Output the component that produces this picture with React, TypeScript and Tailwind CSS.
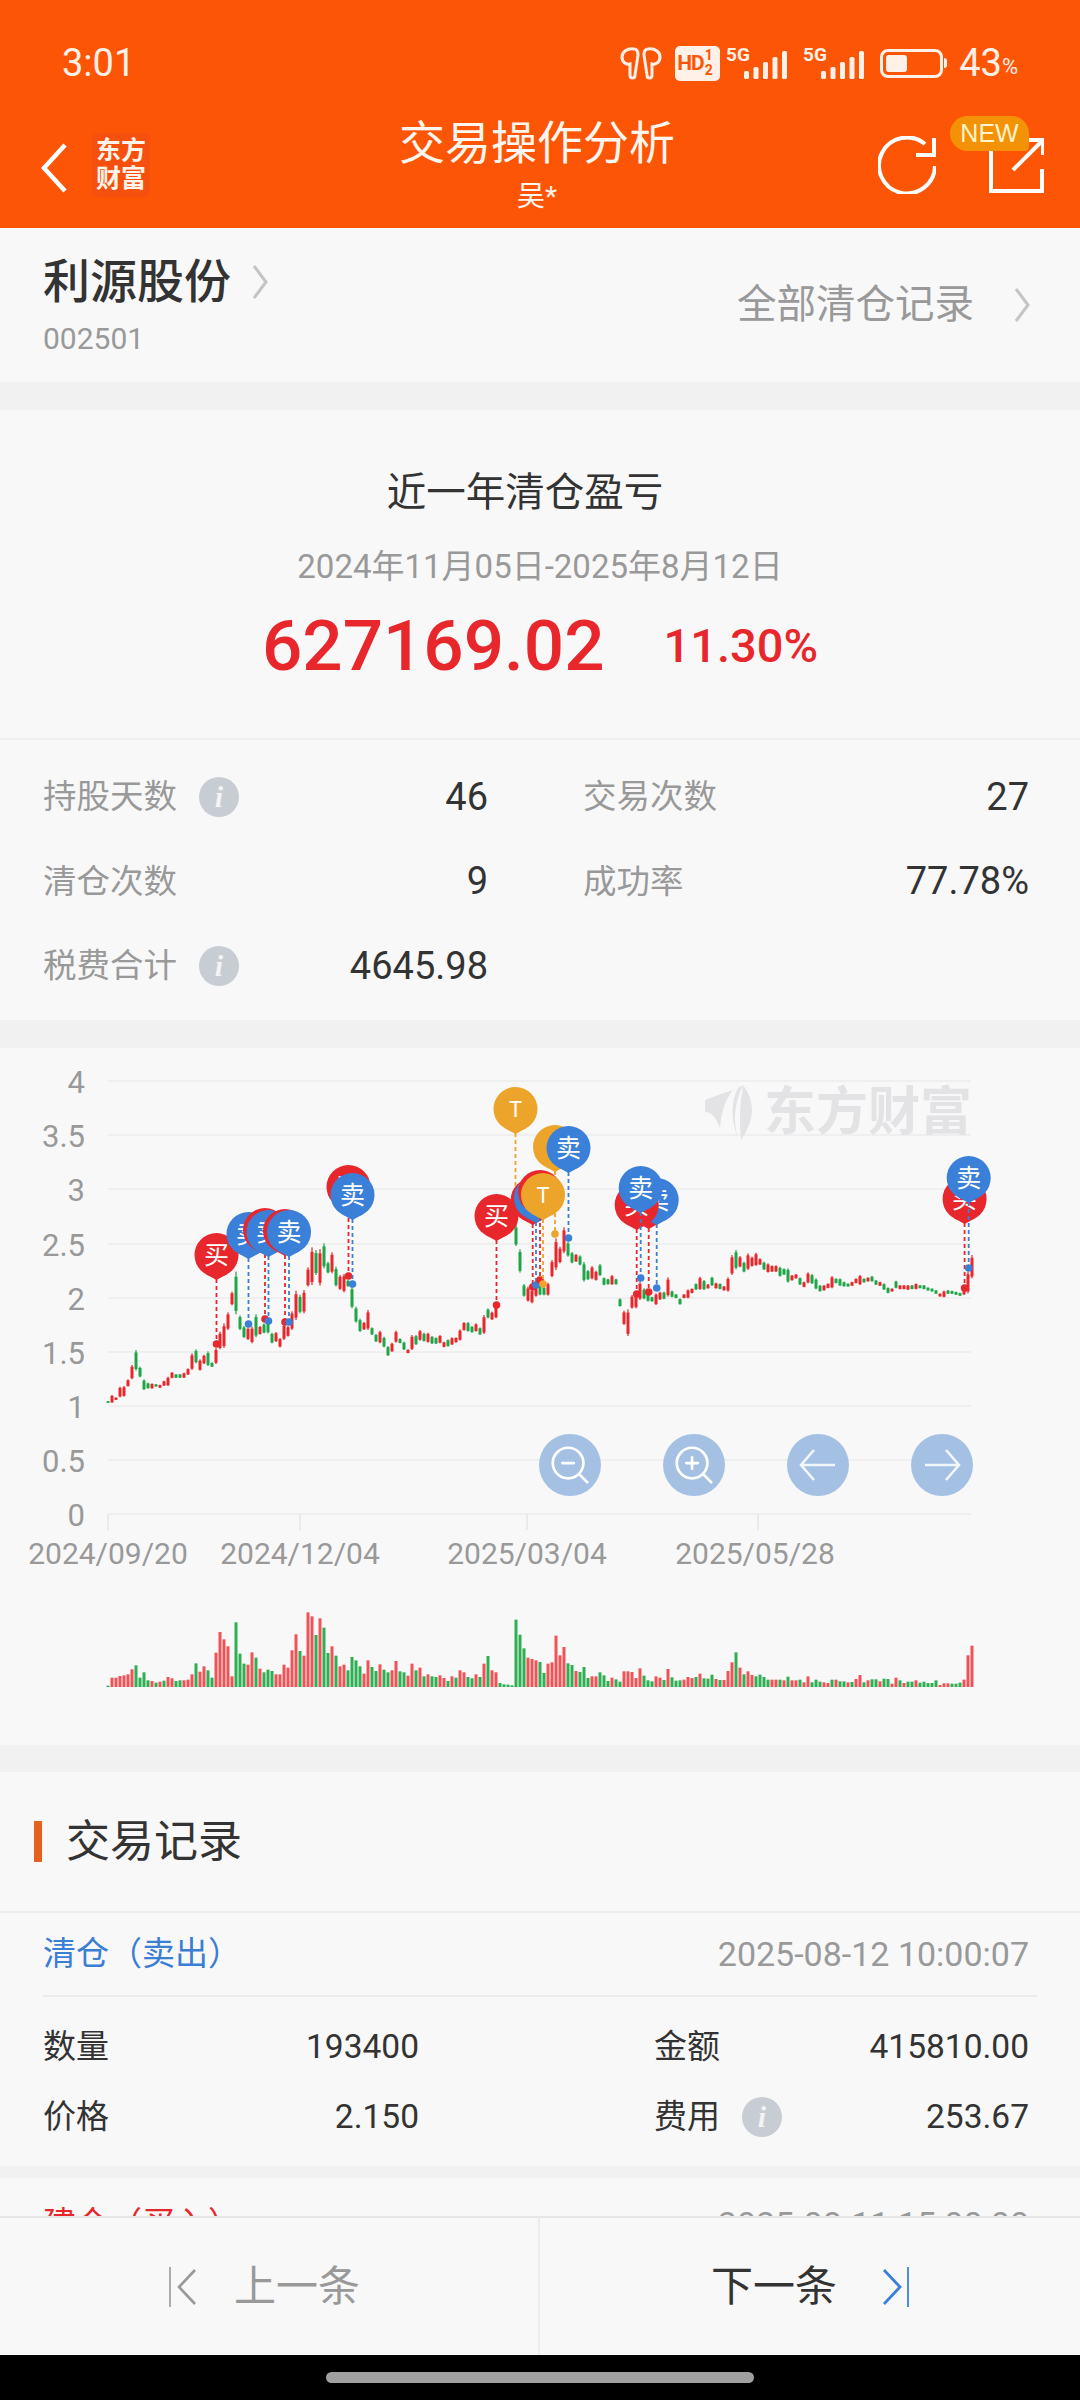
import React from "react";
import { ZoomIn, ZoomOut } from "lucide-react";

type Candle = [number, "r" | "g", number, number];

const RED = "#e8272c";
const GREEN = "#1ea548";
const BLUE = "#3a7fd8";
const ORANGE = "#eda42a";

// Daily candles grouped by stretch; values are in the chart's own vertical units and scaled in toCandles.
const early: Candle[] = [
  [0,"g",543,549],[1,"r",525,549],[2,"r",532,540],[3,"r",500,532],[4,"r",498,530],[5,"r",478,500],[6,"r",435,478],[7,"g",390,452],[8,"g",440,472],[9,"g",478,510],
  [10,"g",488,506],[11,"r",490,506],[12,"g",492,500],[13,"r",494,504],[14,"r",482,498],[15,"r",470,498],[16,"r",456,475],[17,"g",462,474],[18,"g",462,474],[19,"r",458,474],
  [20,"r",445,465],[21,"r",400,450],[22,"g",388,430],[23,"r",418,452],[24,"r",404,432],[25,"g",394,438],[26,"g",427,441],[27,"r",384,432],[28,"r",335,388],[29,"r",310,384],
  [30,"r",277,330],[31,"r",215,256],[32,"g",155,283],[33,"g",286,330],[34,"g",318,354],[35,"r",322,360],[36,"r",320,370],[37,"g",283,352],[38,"r",318,344],[39,"g",310,340],
  [40,"g",300,340],[41,"g",338,370],[42,"r",336,366],[43,"r",354,382],[44,"r",312,360],[45,"r",318,350],[46,"r",274,330],[47,"r",212,300],[48,"g",224,280],[49,"r",210,280],
  [50,"r",142,200],[51,"r",82,195],[52,"g",90,165],[53,"r",87,197],[54,"g",70,145],[55,"g",126,160],[56,"r",97,160],[57,"g",140,200],[58,"r",165,210],[59,"r",162,217],
  [60,"g",180,200],[61,"g",200,265],[62,"g",260,308],[63,"g",296,336],[64,"r",306,330],[65,"r",270,330],[66,"g",322,345],[67,"g",342,366],[68,"r",332,370],[69,"g",350,382],
  [70,"g",378,408],[71,"r",368,396],[72,"r",332,368],[73,"g",355,370],
];
const middle: Candle[] = [
  [74,"g",575,600],[75,"r",598,610],[76,"r",555,600],[77,"g",555,585],[78,"r",540,572],[79,"g",548,575],[80,"r",548,578],[81,"g",558,582],[82,"g",562,582],[83,"r",555,580],
  [84,"r",575,592],[85,"g",568,590],[86,"r",562,585],[87,"r",562,578],[88,"r",538,572],[89,"r",516,542],[90,"g",516,545],[91,"g",528,548],[92,"r",520,545],[93,"g",532,555],
  [94,"r",495,552],[95,"g",475,505],[96,"r",485,510],[97,"r",465,505],[102,"g",225,288],[103,"g",298,368],[104,"g",402,440],[105,"r",410,455],[106,"r",418,460],[107,"r",405,440],
  [108,"g",405,436],[109,"g",410,436],[110,"r",398,437],[111,"r",330,382],[112,"r",265,360],[113,"r",290,340],[114,"r",232,310],[115,"g",275,320],[116,"g",306,340],[117,"r",312,336],
  [118,"g",316,346],[119,"g",336,395],[120,"g",360,390],[121,"r",348,388],[122,"r",362,392],[123,"g",342,378],[124,"g",382,406],[125,"g",386,404],[126,"r",375,405],[127,"g",386,404],
];
const late: Candle[] = [
  [128,"g",775,800],[129,"r",812,855],[130,"r",808,888],[131,"r",765,806],[132,"r",760,805],[133,"r",725,780],[134,"g",745,778],[135,"g",750,785],[136,"g",770,785],[137,"r",760,795],
  [138,"r",755,780],[139,"g",755,778],[140,"r",712,770],[141,"g",752,772],[142,"g",762,775],[143,"g",775,794],[144,"r",762,775],[145,"r",748,775],[146,"r",745,760],[147,"g",730,750],
  [148,"r",710,750],[149,"g",720,750],[150,"r",732,746],[151,"g",710,738],[152,"r",728,746],[153,"g",730,748],[154,"r",738,752],[155,"r",712,755],[156,"r",645,705],[157,"g",630,688],
  [158,"r",648,682],[159,"g",665,697],[160,"r",640,690],[161,"r",650,680],[162,"r",638,678],[163,"r",655,675],[164,"g",665,690],[165,"r",670,698],[166,"r",676,696],[167,"r",676,696],
  [168,"g",680,710],[169,"g",685,705],[170,"g",685,728],[171,"r",705,722],[172,"r",702,716],[173,"g",712,735],[174,"r",725,742],[175,"r",697,730],[176,"g",702,732],[177,"g",715,748],
  [178,"g",735,755],[179,"r",735,752],[180,"r",730,745],[181,"r",708,745],[182,"g",715,730],[183,"g",715,738],[184,"g",725,740],[185,"g",730,740],[186,"r",725,738],[187,"r",715,730],
  [188,"r",705,735],[189,"g",715,728],[190,"r",712,725],[191,"g",708,725],[192,"g",720,735],[193,"r",725,738],[194,"g",730,750],[195,"g",742,760],[196,"r",745,755],[197,"g",722,745],
  [198,"r",735,748],[199,"r",735,748],[200,"r",735,750],[201,"g",735,748],[202,"r",730,748],[203,"g",735,745],[204,"g",735,748],[205,"g",742,752],[206,"g",745,755],[207,"g",750,762],
  [208,"r",760,770],[209,"r",752,772],[210,"g",750,762],[211,"g",752,762],[212,"g",755,765],[213,"g",758,768],[214,"r",740,765],[215,"r",695,760],[216,"r",645,715],
];

const toCandles = (rows: Candle[], base: number) =>
  rows.map(([i, c, t, b]) => ({ x: 108 + 4 * i, c, top: base + t / 3, bottom: base + b / 3 }));

const candles = [...toCandles(early, 1220), ...toCandles(middle, 1150), ...toCandles(late, 1040)];

// Turnover per session: positive closes up, negative closes down.
const volume = [
  -4,28,28,33,35,38,53,-65,-28,-44,-20,18,-13,16,-19,30,26,-18,-20,20,22,38,-71,46,62,-50,-28,103,165,143,122,32,-194,-100,-70,67,104,-88,55,-44,
  -52,-48,38,38,67,58,110,158,-108,94,224,212,-156,206,-178,-102,122,-94,62,67,-50,-90,-80,-62,40,80,-60,-48,68,-52,-44,50,78,-47,-44,34,70,-50,58,-32,
  38,-32,-30,35,27,-18,32,-28,50,44,-30,-26,38,-30,70,-93,50,44,-12,-8,-7,-5,-202,-157,-116,88,84,80,-75,-42,70,74,154,95,120,-71,-66,48,-45,-60,
  -27,32,32,-44,-35,-18,28,-23,-16,47,47,45,27,56,-34,-20,-17,32,28,-21,54,-29,-19,-20,22,30,27,-30,40,-26,-25,-37,24,-21,21,48,74,-104,58,-38,
  47,36,-32,-37,-30,-22,22,22,-22,20,-31,20,20,-22,14,32,-14,-22,-16,14,12,-22,22,-17,-17,14,-15,24,36,-14,20,-23,-23,17,-25,-24,10,28,-20,12,
  -16,-16,20,-13,-16,-12,-12,-20,6,11,11,-10,-10,-13,22,95,124,
];

type Marker = { x: number; cy: number; dot: number; kind: "buy" | "sell" | "t" };

const markers: Marker[] = [
  { x: 216.5, cy: 1255, dot: 1344, kind: "buy" },
  { x: 248.5, cy: 1234, dot: 1324, kind: "sell" },
  { x: 265, cy: 1230, dot: 1319, kind: "buy" },
  { x: 268.5, cy: 1232, dot: 1321, kind: "sell" },
  { x: 285, cy: 1231, dot: 1322, kind: "buy" },
  { x: 289, cy: 1232, dot: 1322, kind: "sell" },
  { x: 348.5, cy: 1187, dot: 1276, kind: "buy" },
  { x: 352.5, cy: 1195, dot: 1284, kind: "sell" },
  { x: 496.5, cy: 1216, dot: 1305, kind: "buy" },
  { x: 515.5, cy: 1109, dot: 1198, kind: "t" },
  { x: 532.7, cy: 1200, dot: 1287, kind: "buy" },
  { x: 536, cy: 1198, dot: 1285, kind: "sell" },
  { x: 540, cy: 1192, dot: 1280, kind: "buy" },
  { x: 543, cy: 1195, dot: 1284, kind: "t" },
  { x: 555, cy: 1147, dot: 1234, kind: "t" },
  { x: 568.5, cy: 1148, dot: 1238, kind: "sell" },
  { x: 648.7, cy: 1204, dot: 1292, kind: "buy" },
  { x: 656.7, cy: 1200, dot: 1288, kind: "sell" },
  { x: 636.7, cy: 1205, dot: 1294, kind: "buy" },
  { x: 640.7, cy: 1188, dot: 1278, kind: "sell" },
  { x: 964.6, cy: 1199, dot: 1288, kind: "buy" },
  { x: 968.7, cy: 1178, dot: 1268, kind: "sell" },
];

const markerStyle = {
  buy: { color: RED, label: "买" },
  sell: { color: BLUE, label: "卖" },
  t: { color: ORANGE, label: "T" },
};

function Balloon({ x, cy, dot, kind }: Marker) {
  const { color, label } = markerStyle[kind];
  return (
    <g>
      <line x1={x} x2={x} y1={cy + 24} y2={dot} stroke={color} strokeWidth={1.8} strokeDasharray="4 3" />
      <circle cx={x} cy={dot} r={3.8} fill={color} />
      <circle cx={x} cy={cy} r={22} fill={color} />
      <path d={`M${x - 11} ${cy + 19} L${x} ${cy + 25} L${x + 11} ${cy + 19} Z`} fill={color} />
      <text x={x} y={cy} fill="#fff" fontSize={kind === "t" ? 22 : 25} textAnchor="middle" dominantBaseline="central">
        {label}
      </text>
    </g>
  );
}

const yLabels: [string, number][] = [
  ["4", 1081], ["3.5", 1135], ["3", 1189], ["2.5", 1244], ["2", 1298], ["1.5", 1352], ["1", 1406], ["0.5", 1460], ["0", 1514],
];
const xLabels: [string, number, number][] = [
  ["2024/09/20", 108, 108],
  ["2024/12/04", 300, 300],
  ["2025/03/04", 527, 527],
  ["2025/05/28", 758, 755],
];

function PriceChart() {
  return (
    <svg width={1080} height={697} viewBox="0 1048 1080 697" className="block">
      {yLabels.map(([t, y]) => (
        <g key={t}>
          <line x1={108} x2={971} y1={y} y2={y} stroke="#efefef" strokeWidth={2.2} />
          <text x={85} y={y + 1} fill="#999" fontSize={31} textAnchor="end" dominantBaseline="central">
            {t}
          </text>
        </g>
      ))}
      {xLabels.map(([t, tick, mid]) => (
        <g key={t}>
          <line x1={tick} x2={tick} y1={1514} y2={1530} stroke="#e6e6e6" strokeWidth={1.5} />
          <text x={mid} y={1553} fill="#999" fontSize={30} textAnchor="middle" dominantBaseline="central">
            {t}
          </text>
        </g>
      ))}

      <g fill="#e3e3e6">
        <path d="M705 1100 Q720 1094 733 1090 Q722 1103 720 1128 Q714 1112 705 1112 Z" />
        <path d="M738 1088 Q727 1110 738 1138 Q730 1112 743 1085 Z" />
        <path d="M743 1085 Q738 1115 741 1140 Q762 1110 743 1085 Z" />
        <text x={764} y={1112} fontSize={52} fontWeight={700} dominantBaseline="central">
          东方财富
        </text>
      </g>

      {candles.map(({ x, c, top, bottom }) => {
        const fill = c === "r" ? RED : GREEN;
        const span = bottom - top;
        return (
          <g key={x} fill={fill}>
            <rect x={x - 0.6} y={top} width={1.2} height={span} />
            <rect x={x - 1.5} y={top + span * 0.12} width={3} height={span * 0.8} />
          </g>
        );
      })}

      {markers.map((m) => (
        <Balloon key={`${m.kind}-${m.x}`} {...m} />
      ))}

      {volume.map((v, i) => {
        const h = Math.abs(v) / 3;
        return <rect key={i} x={106.5 + 4 * i} y={1687 - h} width={3} height={h} fill={v > 0 ? "#ef5358" : "#2fae52"} />;
      })}
    </svg>
  );
}

function ArrowGlyph({ flip }: { flip?: boolean }) {
  return (
    <svg width={62} height={62} viewBox="0 0 62 62" fill="none" stroke="#fff" strokeWidth={2.6} strokeOpacity={0.85}>
      <g transform={flip ? "matrix(-1 0 0 1 62 0)" : undefined}>
        <path d="M14 31 H48 M27 16 L14 31 L27 46" />
      </g>
    </svg>
  );
}

const ChartButton = ({ children }: { children: React.ReactNode }) => (
  <div className="flex h-[62px] w-[62px] items-center justify-center rounded-full bg-[#a4c0e3]">{children}</div>
);

const InfoDot = () => (
  <span className="flex h-[40px] w-[40px] items-center justify-center rounded-full bg-[#c8ccd3] font-['Liberation_Serif',serif] text-[30px] font-bold italic leading-none text-[#f4f4f4]">
    i
  </span>
);

function Stat({ label, value, info }: { label: string; value: string; info?: boolean }) {
  return (
    <div className="flex h-[84.5px] items-center justify-between">
      <div className="flex items-center gap-[22px]">
        <span className="text-[33.5px] text-[#999]">{label}</span>
        {info && <InfoDot />}
      </div>
      <span className="text-[38px] text-[#333]">{value}</span>
    </div>
  );
}

function Field({ label, value, info }: { label: string; value: string; info?: boolean }) {
  return (
    <div className="flex h-[70px] items-center justify-between">
      <div className="flex items-center gap-[22px]">
        <span className="text-[33px] text-[#333]">{label}</span>
        {info && <InfoDot />}
      </div>
      <span className="text-[33.5px] text-[#333]">{value}</span>
    </div>
  );
}

const Chevron = ({ className }: { className: string }) => (
  <svg width={16} height={36} viewBox="0 0 16 36" fill="none" stroke="#c4c4c4" strokeWidth={3} className={className}>
    <path d="M2 2 L14 18 L2 34" />
  </svg>
);

function CellSignal() {
  const bars = [8, 12, 17, 22, 28];
  return (
    <svg width={61} height={34} viewBox="0 0 61 34" fill="#fff1e8">
      <text x={0} y={15} fontSize={19} fontWeight={700}>
        5G
      </text>
      {bars.map((h, i) => (
        <rect key={i} x={18 + i * 9.5} y={33 - h} width={5} height={h} rx={1.5} />
      ))}
    </svg>
  );
}

function StatusBar() {
  return (
    <div className="flex h-[110px] items-center justify-between pl-[62px] pr-[62px] pt-[16px] text-[#fff1e8]">
      <span className="text-[38px] leading-none">3:01</span>
      <div className="flex items-center">
        <svg width={42} height={34} viewBox="0 0 42 34" fill="none" stroke="#fff1e8" strokeWidth={3}>
          <path d="M14 3 C7 2 2 6 2 11 C2 16 6 19 10 18 L10 29 C10 33 15 33 15 29 L18 9 C18 5 17 3 14 3 Z" />
          <path d="M28 3 C35 2 40 6 40 11 C40 16 36 19 32 18 L32 29 C32 33 27 33 27 29 L24 9 C24 5 25 3 28 3 Z" />
        </svg>
        <div className="ml-[13px] flex h-[35px] w-[45px] items-center rounded-[5px] bg-[#fff1e8] pl-[2px] text-[#fd5506]">
          <span className="text-[21px] font-bold leading-none tracking-[-1px]">HD</span>
          <span className="ml-[1px] flex flex-col text-[14px] font-bold leading-[15px]">
            <span>1</span>
            <span>2</span>
          </span>
        </div>
        <div className="ml-[6px]">
          <CellSignal />
        </div>
        <div className="ml-[16px]">
          <CellSignal />
        </div>
        <div className="ml-[16px] flex items-center">
          <div className="h-[29px] w-[63px] rounded-[8px] border-[3px] border-[#fff1e8] p-[3px]">
            <div className="h-full w-[40%] rounded-[3px] bg-[#fff1e8]" />
          </div>
          <div className="ml-[1px] h-[10px] w-[3px] rounded-r-sm bg-[#fff1e8]" />
        </div>
        <span className="ml-[12px] text-[38px] leading-none">43</span>
        <span className="mt-[8px] text-[22px] leading-none">%</span>
      </div>
    </div>
  );
}

function NavBar() {
  return (
    <div className="flex h-[118px] text-white">
      <div className="flex w-[300px] items-start pl-[40px] pt-[23px]">
        <svg width={28} height={50} viewBox="0 0 28 50" fill="none" stroke="#fff" strokeWidth={4.5} className="mt-[10px]">
          <path d="M25 2 L4 25 L25 48" />
        </svg>
        <div className="ml-[24px] flex h-[64px] w-[58px] flex-col items-center justify-center rounded-[6px] bg-[#f6500f] text-[25px] font-bold leading-[28px] text-[#fff3ea]">
          <span>东方</span>
          <span>财富</span>
        </div>
      </div>
      <div className="flex flex-1 flex-col items-center pt-[5px]">
        <span className="text-[46px] leading-[56px] text-[#fff6f0]">交易操作分析</span>
        <span className="mt-[8px] text-[28px] leading-[36px] text-[#fff6f0]">吴*</span>
      </div>
      <div className="flex w-[306px] items-start justify-end gap-[53px] pr-[36px] pt-[26px]">
        <svg width={58} height={58} viewBox="0 0 58 58" fill="none" stroke="#fff" strokeWidth={4}>
          <path d="M47 8 A28 28 0 1 0 57 30" />
          <path d="M56 2 V19 H38" />
        </svg>
        <div className="relative mt-[2px] h-[55px] w-[55px]">
          <svg width={55} height={55} viewBox="0 0 55 55" fill="none" stroke="#fff" strokeWidth={4}>
            <path d="M2 10 V53 H53 V31" />
            <path d="M24 32 L53 3 M40 2 H54 V17" />
          </svg>
          <span className="absolute left-[-39px] top-[-22px] flex h-[35px] w-[79px] items-center justify-center rounded-[18px] rounded-br-[4px] bg-[#f39207] font-['Liberation_Sans',sans-serif] text-[25px] leading-none text-[#fff3c8]">
            NEW
          </span>
        </div>
      </div>
    </div>
  );
}

export default function App() {
  return (
    <div className="flex h-[2400px] w-[1080px] flex-col overflow-hidden bg-[#f8f8f8] font-[Roboto,'Noto_Sans_CJK_SC',sans-serif]">
      <header className="h-[228px] shrink-0 bg-[#fd5506]">
        <StatusBar />
        <NavBar />
      </header>

      <main className="min-h-0 flex-1 overflow-hidden">
        <section className="flex h-[154px] justify-between border-b-[28px] border-transparent px-[43px] box-content pb-0">
          <div className="pt-[26px]">
            <div className="flex items-center">
              <span className="text-[47px] font-medium leading-[56px] text-[#333]">利源股份</span>
              <Chevron className="ml-[21px]" />
            </div>
            <div className="mt-[11px] text-[30px] leading-[36px] text-[#999]">002501</div>
          </div>
          <div className="flex items-center pr-[7px]">
            <span className="text-[39.5px] text-[#999]">全部清仓记录</span>
            <Chevron className="ml-[40px]" />
          </div>
        </section>
        <div className="mt-[-28px] h-[28px] bg-[#f1f1f1]" />

        <section className="flex h-[330px] flex-col items-center border-b-2 border-[#efefef] pt-[58px]">
          <h2 className="pr-[30px] text-[39.5px] font-normal leading-[50px] text-[#333]">近一年清仓盈亏</h2>
          <div className="mt-[29px] text-[33px] leading-[40px] text-[#999]">2024年11月05日-2025年8月12日</div>
          <div className="mt-[19px] flex items-center gap-[59px] leading-[80px] text-[#e8272c]">
            <span className="text-[71px] font-medium">627169.02</span>
            <span className="text-[47px] font-medium">11.30%</span>
          </div>
        </section>

        <section className="grid h-[280px] grid-cols-[445px_446px] content-start gap-x-[95px] pl-[43px] pt-[15px]">
          <Stat label="持股天数" value="46" info />
          <Stat label="交易次数" value="27" />
          <Stat label="清仓次数" value="9" />
          <Stat label="成功率" value="77.78%" />
          <Stat label="税费合计" value="4645.98" info />
        </section>
        <div className="h-[28px] bg-[#f1f1f1]" />

        <section className="relative h-[697px]">
          <PriceChart />
          <div className="absolute left-[539px] top-[386px] flex gap-[62px]">
            <ChartButton>
              <ZoomOut size={46} color="#fff" strokeWidth={1.4} />
            </ChartButton>
            <ChartButton>
              <ZoomIn size={46} color="#fff" strokeWidth={1.4} />
            </ChartButton>
            <ChartButton>
              <ArrowGlyph />
            </ChartButton>
            <ChartButton>
              <ArrowGlyph flip />
            </ChartButton>
          </div>
        </section>
        <div className="h-[27px] bg-[#f1f1f1]" />

        <section className="h-[394px]">
          <div className="flex h-[141px] items-center gap-[24px] border-b-2 border-[#ececec] pl-[34px]">
            <span className="h-[41px] w-[8px] bg-[#e4621b]" />
            <h2 className="text-[44px] font-normal text-[#333]">交易记录</h2>
          </div>
          <div className="mx-[43px] flex h-[84px] items-center justify-between border-b-2 border-[#ececec] pr-[8px]">
            <span className="text-[33px] text-[#3a7fd3]">清仓（卖出）</span>
            <span className="text-[34px] text-[#999]">2025-08-12 10:00:07</span>
          </div>
          <div className="grid grid-cols-[376px_375px] gap-x-[235px] pl-[43px] pt-[15px]">
            <Field label="数量" value="193400" />
            <Field label="金额" value="415810.00" />
            <Field label="价格" value="2.150" />
            <Field label="费用" value="253.67" info />
          </div>
        </section>
        <div className="h-[12px] bg-[#f1f1f1]" />

        <div className="mx-[43px] flex h-[92px] items-center justify-between pr-[8px]">
          <span className="text-[33px] text-[#e8272c]">建仓（买入）</span>
          <span className="text-[34px] text-[#999]">2025-08-11 15:00:00</span>
        </div>
      </main>

      <footer className="flex h-[139px] shrink-0 border-t-2 border-[#e6e6e6] bg-[#f8f8f8]">
        <div className="flex w-[540px] items-center border-r-2 border-[#ececec] pl-[168px] text-[#999]">
          <svg width={30} height={42} viewBox="0 0 30 42" fill="none" stroke="#999" strokeWidth={2}>
            <path d="M2 1 V41" strokeWidth={1.6} />
            <path d="M27 4 L11 21 L27 38" strokeWidth={2.6} />
          </svg>
          <span className="ml-[36px] text-[42px] leading-none">上一条</span>
        </div>
        <div className="flex flex-1 items-center pl-[171px] text-[#333]">
          <span className="text-[42px] leading-none">下一条</span>
          <svg width={30} height={42} viewBox="0 0 30 42" fill="none" className="ml-[44px]">
            <path d="M3 4 L19 21 L3 38" stroke={BLUE} strokeWidth={2.8} />
            <path d="M27 1 V41" stroke={BLUE} strokeWidth={1.8} />
          </svg>
        </div>
      </footer>

      <div className="flex h-[45px] shrink-0 items-start justify-center bg-black pt-[17px]">
        <div className="h-[11px] w-[428px] rounded-full bg-[#a0a0a0]" />
      </div>
    </div>
  );
}
